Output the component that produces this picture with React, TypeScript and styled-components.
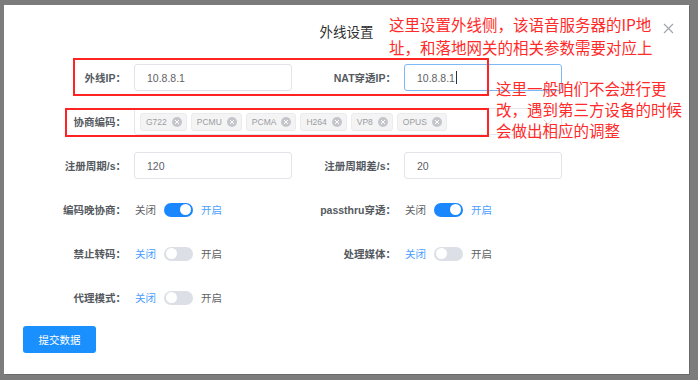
import React from "react";
import styled, { createGlobalStyle, css } from "styled-components";

const Global = createGlobalStyle`
  html, body { margin: 0; padding: 0; }
  body {
    width: 698px;
    height: 380px;
    overflow: hidden;
    background: #7c7c7c;
    font-family: "Liberation Sans", "Noto Sans CJK SC", sans-serif;
  }
  * { box-sizing: border-box; }
`;

const Screen = styled.div`
  position: relative;
  width: 698px;
  height: 380px;
  padding: 5px 9px 6px 4px;
  background: #7c7c7c;
`;

const Dialog = styled.div`
  position: relative;
  height: 100%;
  background: #fff;
  box-shadow: 1px 1px 0 #6a6a6a;
  display: flex;
  flex-direction: column;
  padding: 0 0 0 19px;
`;

const Header = styled.div`
  height: 50px;
  margin-left: -19px;
  display: flex;
  align-items: center;
  justify-content: center;
`;

const Title = styled.div`
  font-family: "Noto Sans CJK SC", sans-serif;
  font-size: 13.5px;
  color: #303133;
  padding-top: 1px;
`;

const Close = styled.button`
  position: absolute;
  top: 17px;
  right: 15px;
  width: 12px;
  height: 12px;
  padding: 0;
  border: 0;
  background: none;
  display: flex;
  align-items: center;
  justify-content: center;
`;

const Form = styled.div`
  padding-top: 9px;
  display: grid;
  grid-template-columns: 111px 158px 112px 158px;
  grid-auto-rows: 27px;
  row-gap: 17px;
`;

const Label = styled.div`
  display: flex;
  align-items: center;
  justify-content: flex-end;
  padding-right: 8px;
  font-size: 10.5px;
  font-weight: 700;
  color: #555a61;
  white-space: nowrap;
`;

const Input = styled.div<{ $focused?: boolean }>`
  display: flex;
  align-items: center;
  height: 27px;
  padding-left: 12px;
  border: 1px solid ${(p) => (p.$focused ? "#7db9f5" : "#e2e4ea")};
  border-radius: 3px;
  font-size: 10.5px;
  color: #606266;
  background: #fff;
`;

const Caret = styled.span`
  display: inline-block;
  width: 1px;
  height: 13px;
  margin-left: 1px;
  background: #303133;
`;

const Select = styled.div`
  grid-column: 2 / span 3;
  position: relative;
  display: flex;
  align-items: center;
  gap: 4px;
  padding-left: 5px;
  border: 1px solid #e4e7ed;
  border-radius: 3px;
`;

const Tag = styled.span`
  display: inline-flex;
  align-items: center;
  gap: 5px;
  height: 18px;
  padding: 0 4px 0 5px;
  background: #f4f4f5;
  border: 1px solid #ebebee;
  border-radius: 3px;
  font-size: 8.5px;
  color: #9a9ca2;
`;

const TagClose = styled.span`
  width: 10px;
  height: 10px;
  border-radius: 50%;
  background: #c4c6cc;
  display: flex;
  align-items: center;
  justify-content: center;
`;

const Arrow = styled.span`
  position: absolute;
  right: 8px;
  top: 50%;
  transform: translateY(-50%);
  display: flex;
`;

const SwitchGroup = styled.div`
  display: flex;
  align-items: center;
  gap: 8px;
  padding-left: 1px;
  font-family: "Noto Sans CJK SC", sans-serif;
  font-size: 10.5px;
`;

const SwitchText = styled.span<{ $active: boolean }>`
  color: ${(p) => (p.$active ? "#4a9eff" : "#606266")};
`;

const Track = styled.span<{ $on: boolean }>`
  position: relative;
  width: 29px;
  height: 14px;
  border-radius: 7px;
  background: ${(p) => (p.$on ? "#1a87ff" : "#dcdfe6")};
  &::after {
    content: "";
    position: absolute;
    top: 1.5px;
    width: 11px;
    height: 11px;
    border-radius: 50%;
    background: #fff;
    ${(p) => (p.$on ? css`right: 2px;` : css`left: 2px;`)}
  }
`;

const Footer = styled.div`
  margin-top: 15px;
`;

const Button = styled.button`
  width: 73px;
  height: 27px;
  border: 0;
  border-radius: 3px;
  background: #1a90ff;
  color: #fff;
  font-family: "Noto Sans CJK SC", sans-serif;
  font-size: 10.5px;
  padding: 0;
`;

const Mark = styled.div<{ $x: number; $y: number; $w: number; $h: number }>`
  position: absolute;
  left: ${(p) => p.$x}px;
  top: ${(p) => p.$y}px;
  width: ${(p) => p.$w}px;
  height: ${(p) => p.$h}px;
  border: 2px solid #ff2323;
  pointer-events: none;
`;

const Note = styled.div<{ $x: number; $y: number; $lh: number }>`
  position: absolute;
  left: ${(p) => p.$x}px;
  top: ${(p) => p.$y}px;
  font-family: "Noto Sans CJK SC", sans-serif;
  font-size: 15.5px;
  line-height: ${(p) => p.$lh}px;
  color: #ff2a2a;
  white-space: nowrap;
`;

const codecs = ["G722", "PCMU", "PCMA", "H264", "VP8", "OPUS"];

function Switch({ on }: { on: boolean }) {
  return (
    <SwitchGroup>
      <SwitchText $active={!on}>关闭</SwitchText>
      <Track $on={on} />
      <SwitchText $active={on}>开启</SwitchText>
    </SwitchGroup>
  );
}

export default function App() {
  return (
    <>
      <Global />
      <Screen>
        <Dialog>
          <Header>
            <Title>外线设置</Title>
          </Header>
          <Close aria-label="close">
            <svg width="11" height="11" viewBox="0 0 11 11">
              <path d="M1 1L10 10M10 1L1 10" stroke="#a0a3a8" strokeWidth="1.1" />
            </svg>
          </Close>
          <Form>
            <Label>外线IP：</Label>
            <Input>10.8.8.1</Input>
            <Label>NAT穿透IP：</Label>
            <Input $focused>
              10.8.8.1
              <Caret />
            </Input>

            <Label>协商编码：</Label>
            <Select>
              {codecs.map((c) => (
                <Tag key={c}>
                  {c}
                  <TagClose>
                    <svg width="6" height="6" viewBox="0 0 6 6">
                      <path d="M1 1L5 5M5 1L1 5" stroke="#fff" strokeWidth="1" />
                    </svg>
                  </TagClose>
                </Tag>
              ))}
              <Arrow>
                <svg width="10" height="6" viewBox="0 0 10 6">
                  <path d="M1 1L5 5L9 1" stroke="#d0d3d9" strokeWidth="1" fill="none" />
                </svg>
              </Arrow>
            </Select>

            <Label>注册周期/s：</Label>
            <Input>120</Input>
            <Label>注册周期差/s：</Label>
            <Input>20</Input>

            <Label>编码晚协商：</Label>
            <Switch on />
            <Label>passthru穿透：</Label>
            <Switch on />

            <Label>禁止转码：</Label>
            <Switch on={false} />
            <Label>处理媒体：</Label>
            <Switch on={false} />

            <Label>代理模式：</Label>
            <Switch on={false} />
          </Form>
          <Footer>
            <Button>提交数据</Button>
          </Footer>
        </Dialog>

        <Mark $x={73} $y={58} $w={416} $h={38} />
        <Mark $x={65} $y={108} $w={424} $h={29} />
        <Note $x={389} $y={13} $lh={23}>
          这里设置外线侧，该语音服务器的IP地
          <br />
          址，和落地网关的相关参数需要对应上
        </Note>
        <Note $x={496} $y={78} $lh={21}>
          这里一般咱们不会进行更
          <br />
          改，遇到第三方设备的时候
          <br />
          会做出相应的调整
        </Note>
      </Screen>
    </>
  );
}
